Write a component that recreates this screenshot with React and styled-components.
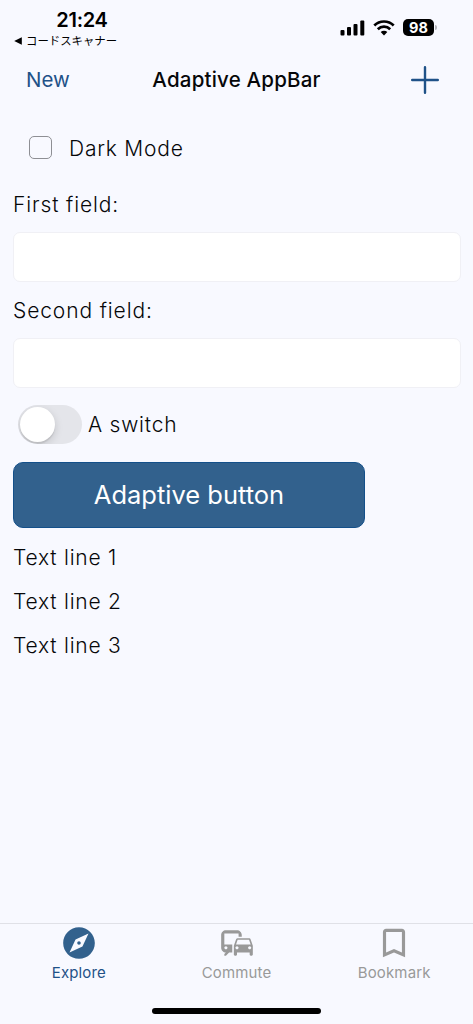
import { useState } from "react";
import styled, { createGlobalStyle } from "styled-components";
import { MdBookmarkBorder, MdCommute, MdExplore } from "react-icons/md";

const colors = {
  background: "#f8f9ff",
  primary: "#32618d",
  link: "#1f5288",
  text: "#060709",
  inactive: "#999999",
};

const tabs = [
  { label: "Explore", icon: MdExplore },
  { label: "Commute", icon: MdCommute },
  { label: "Bookmark", icon: MdBookmarkBorder },
];

const lines = ["Text line 1", "Text line 2", "Text line 3"];

const SignalIcon = () => (
  <svg width="25" height="16" viewBox="0 0 25 16">
    <rect x="0.5" y="10" width="4" height="5.5" rx="1" />
    <rect x="7" y="7" width="4" height="8.5" rx="1" />
    <rect x="13.5" y="4" width="4" height="11.5" rx="1" />
    <rect x="20.3" y="0.6" width="4" height="14.9" rx="1" />
  </svg>
);

const WifiIcon = () => (
  <svg width="22" height="16" viewBox="0 0 22 16">
    <g fill="none" stroke="#000" strokeWidth="2.7">
      <path d="M1.3 5.5a13.8 13.8 0 0 1 19.4 0" />
      <path d="M4.8 9.2a8.8 8.8 0 0 1 12.4 0" />
    </g>
    <path d="M11 15.4 7.7 12.1a4.7 4.7 0 0 1 6.6 0Z" />
  </svg>
);

const PlusIcon = () => (
  <svg width="28" height="28" viewBox="0 0 28 28">
    <path
      d="M14 1.2v25.6M1.2 14h25.6"
      stroke={colors.link}
      strokeWidth="2.4"
      strokeLinecap="round"
    />
  </svg>
);

export default function App() {
  const [dark, setDark] = useState(false);
  const [enabled, setEnabled] = useState(false);
  const [activeTab, setActiveTab] = useState("Explore");

  return (
    <>
      <GlobalStyle />
      <Screen>
        <StatusBar>
          <ClockSection>
            <Clock>21:24</Clock>
            <BackLink>
              <svg width="8" height="8" viewBox="0 0 8 8">
                <path d="M7.8 0.2v7.6L0.2 4Z" />
              </svg>
              <span>コードスキャナー</span>
            </BackLink>
          </ClockSection>
          <Indicators>
            <SignalIcon />
            <WifiIcon />
            <Battery>98</Battery>
          </Indicators>
        </StatusBar>

        <AppBar>
          <NewButton>New</NewButton>
          <Title>Adaptive AppBar</Title>
          <AddButton aria-label="Add">
            <PlusIcon />
          </AddButton>
        </AppBar>

        <Content>
          <CheckboxRow>
            <Checkbox
              type="checkbox"
              checked={dark}
              onChange={() => setDark(!dark)}
            />
            <RowLabel>Dark Mode</RowLabel>
          </CheckboxRow>
          <Field>
            <FieldLabel>First field:</FieldLabel>
            <FieldInput />
          </Field>
          <Field>
            <FieldLabel>Second field:</FieldLabel>
            <FieldInput />
          </Field>
          <SwitchRow>
            <Switch
              role="switch"
              aria-label="A switch"
              aria-checked={enabled}
              $on={enabled}
              onClick={() => setEnabled(!enabled)}
            />
            <RowLabel>A switch</RowLabel>
          </SwitchRow>
          <FilledButton>Adaptive button</FilledButton>
          {lines.map((line) => (
            <TextLine key={line}>{line}</TextLine>
          ))}
        </Content>

        <TabBar>
          {tabs.map(({ label, icon: Icon }) => (
            <Tab
              key={label}
              $active={activeTab === label}
              onClick={() => setActiveTab(label)}
            >
              <Icon size={38} />
              <TabLabel $active={activeTab === label}>{label}</TabLabel>
            </Tab>
          ))}
        </TabBar>
        <HomeArea>
          <HomeIndicator />
        </HomeArea>
      </Screen>
    </>
  );
}

const GlobalStyle = createGlobalStyle`
  * {
    box-sizing: border-box;
  }

  body {
    margin: 0;
    background: ${colors.background};
    color: ${colors.text};
    font-family: Inter, "Noto Sans CJK JP", sans-serif;
  }

  button,
  input {
    margin: 0;
    padding: 0;
    border: none;
    background: none;
    font-family: inherit;
  }
`;

const Screen = styled.div`
  display: flex;
  flex-direction: column;
  height: 1024px;
  overflow: hidden;
`;

const StatusBar = styled.header`
  display: flex;
  justify-content: space-between;
  height: 50px;
  padding: 8px 39px 0 14px;
  color: #000;
`;

const ClockSection = styled.div`
  display: flex;
  flex-direction: column;
  width: 136px;
`;

const Clock = styled.div`
  text-align: center;
  font-size: 20px;
  font-weight: 600;
  line-height: 24px;
  letter-spacing: -0.3px;
`;

const BackLink = styled.div`
  display: flex;
  align-items: center;
  gap: 4px;
  font-family: "Noto Sans CJK JP", sans-serif;
  font-size: 11.4px;
  line-height: 17px;
  white-space: nowrap;
`;

const Indicators = styled.div`
  display: flex;
  align-items: center;
  gap: 8px;
  height: 39px;
`;

const Battery = styled.div`
  position: relative;
  width: 31px;
  height: 17px;
  border-radius: 5px;
  background: #000;
  color: #fff;
  text-align: center;
  font-size: 14.5px;
  font-weight: 700;
  line-height: 17px;

  &::after {
    content: "";
    position: absolute;
    top: 6px;
    right: -3px;
    width: 2px;
    height: 5px;
    border-radius: 0 2px 2px 0;
    background: #b4b5ba;
  }
`;

const AppBar = styled.nav`
  display: grid;
  grid-template-columns: 1fr auto 1fr;
  align-items: center;
  height: 60px;
  padding: 0 34px 0 26px;
`;

const NewButton = styled.button`
  justify-self: start;
  color: ${colors.link};
  font-size: 20.5px;
  line-height: 28px;
`;

const Title = styled.h1`
  margin: 0 0 0 8px;
  font-size: 20.5px;
  font-weight: 500;
  line-height: 28px;
  letter-spacing: 0.2px;
`;

const AddButton = styled.button`
  display: flex;
  justify-self: end;
  padding-bottom: 1px;
`;

const Content = styled.main`
  display: flex;
  flex: 1;
  flex-direction: column;
  align-items: flex-start;
  padding: 12px 12px 0 13px;
  font-size: 21px;
  font-weight: 300;
  line-height: 28px;
  letter-spacing: 0.78px;
`;

const CheckboxRow = styled.label`
  display: flex;
  align-items: center;
  gap: 17px;
  height: 51px;
  padding-left: 16px;
`;

const RowLabel = styled.span`
  padding-top: 2px;
`;

const Checkbox = styled.input`
  appearance: none;
  width: 23px;
  height: 23px;
  border: 1px solid #8e8f94;
  border-radius: 5px;

  &:checked {
    background: ${colors.primary};
  }
`;

const Field = styled.label`
  display: flex;
  flex-direction: column;
  width: 100%;
  height: 106px;
  padding-top: 18px;
`;

const FieldLabel = styled.span`
  margin-bottom: 13px;
  letter-spacing: 0.88px;
`;

const FieldInput = styled.input`
  flex-shrink: 0;
  width: 448px;
  height: 50px;
  padding: 0 12px;
  border: 1px solid #f0f0f5;
  border-radius: 7px;
  background: #fff;
  font-size: 21px;
`;

const SwitchRow = styled.div`
  display: flex;
  align-items: center;
  gap: 6px;
  height: 77px;
  padding: 1px 0 0 5px;
`;

const Switch = styled.button`
  display: flex;
  justify-content: ${({ $on }) => ($on ? "flex-end" : "flex-start")};
  width: 64px;
  height: 39px;
  padding: 2px 1.5px;
  border-radius: 20px;
  background: ${({ $on }) => ($on ? colors.primary : "#e4e5ea")};
  overflow: hidden;

  &::before {
    content: "";
    width: 35px;
    height: 35px;
    border-radius: 50%;
    background: #fff;
    box-shadow: 0 3px 8px rgba(0, 0, 0, 0.15), 0 2px 1px rgba(0, 0, 0, 0.08);
  }
`;

const FilledButton = styled.button`
  width: 352px;
  height: 66px;
  margin-bottom: 8px;
  padding-bottom: 1px;
  border: 1px solid #14508a;
  border-radius: 10px;
  background: ${colors.primary};
  color: #fff;
  font-size: 25.5px;
`;

const TextLine = styled.p`
  margin: 0;
  line-height: 44px;
`;

const TabBar = styled.nav`
  display: flex;
  height: 78px;
  border-top: 1px solid #e0e1e7;
`;

const Tab = styled.button`
  display: flex;
  flex: 1;
  flex-direction: column;
  align-items: center;
  color: ${({ $active }) => ($active ? colors.primary : colors.inactive)};
`;

const TabLabel = styled.span`
  color: ${({ $active }) => ($active ? colors.link : colors.inactive)};
  font-size: 15px;
  font-weight: 400;
  line-height: 22px;
  letter-spacing: 0.15px;
`;

const HomeArea = styled.div`
  display: flex;
  justify-content: center;
  height: 23px;
  padding-top: 7px;
`;

const HomeIndicator = styled.div`
  width: 169px;
  height: 6px;
  border-radius: 3px;
  background: #000;
`;
